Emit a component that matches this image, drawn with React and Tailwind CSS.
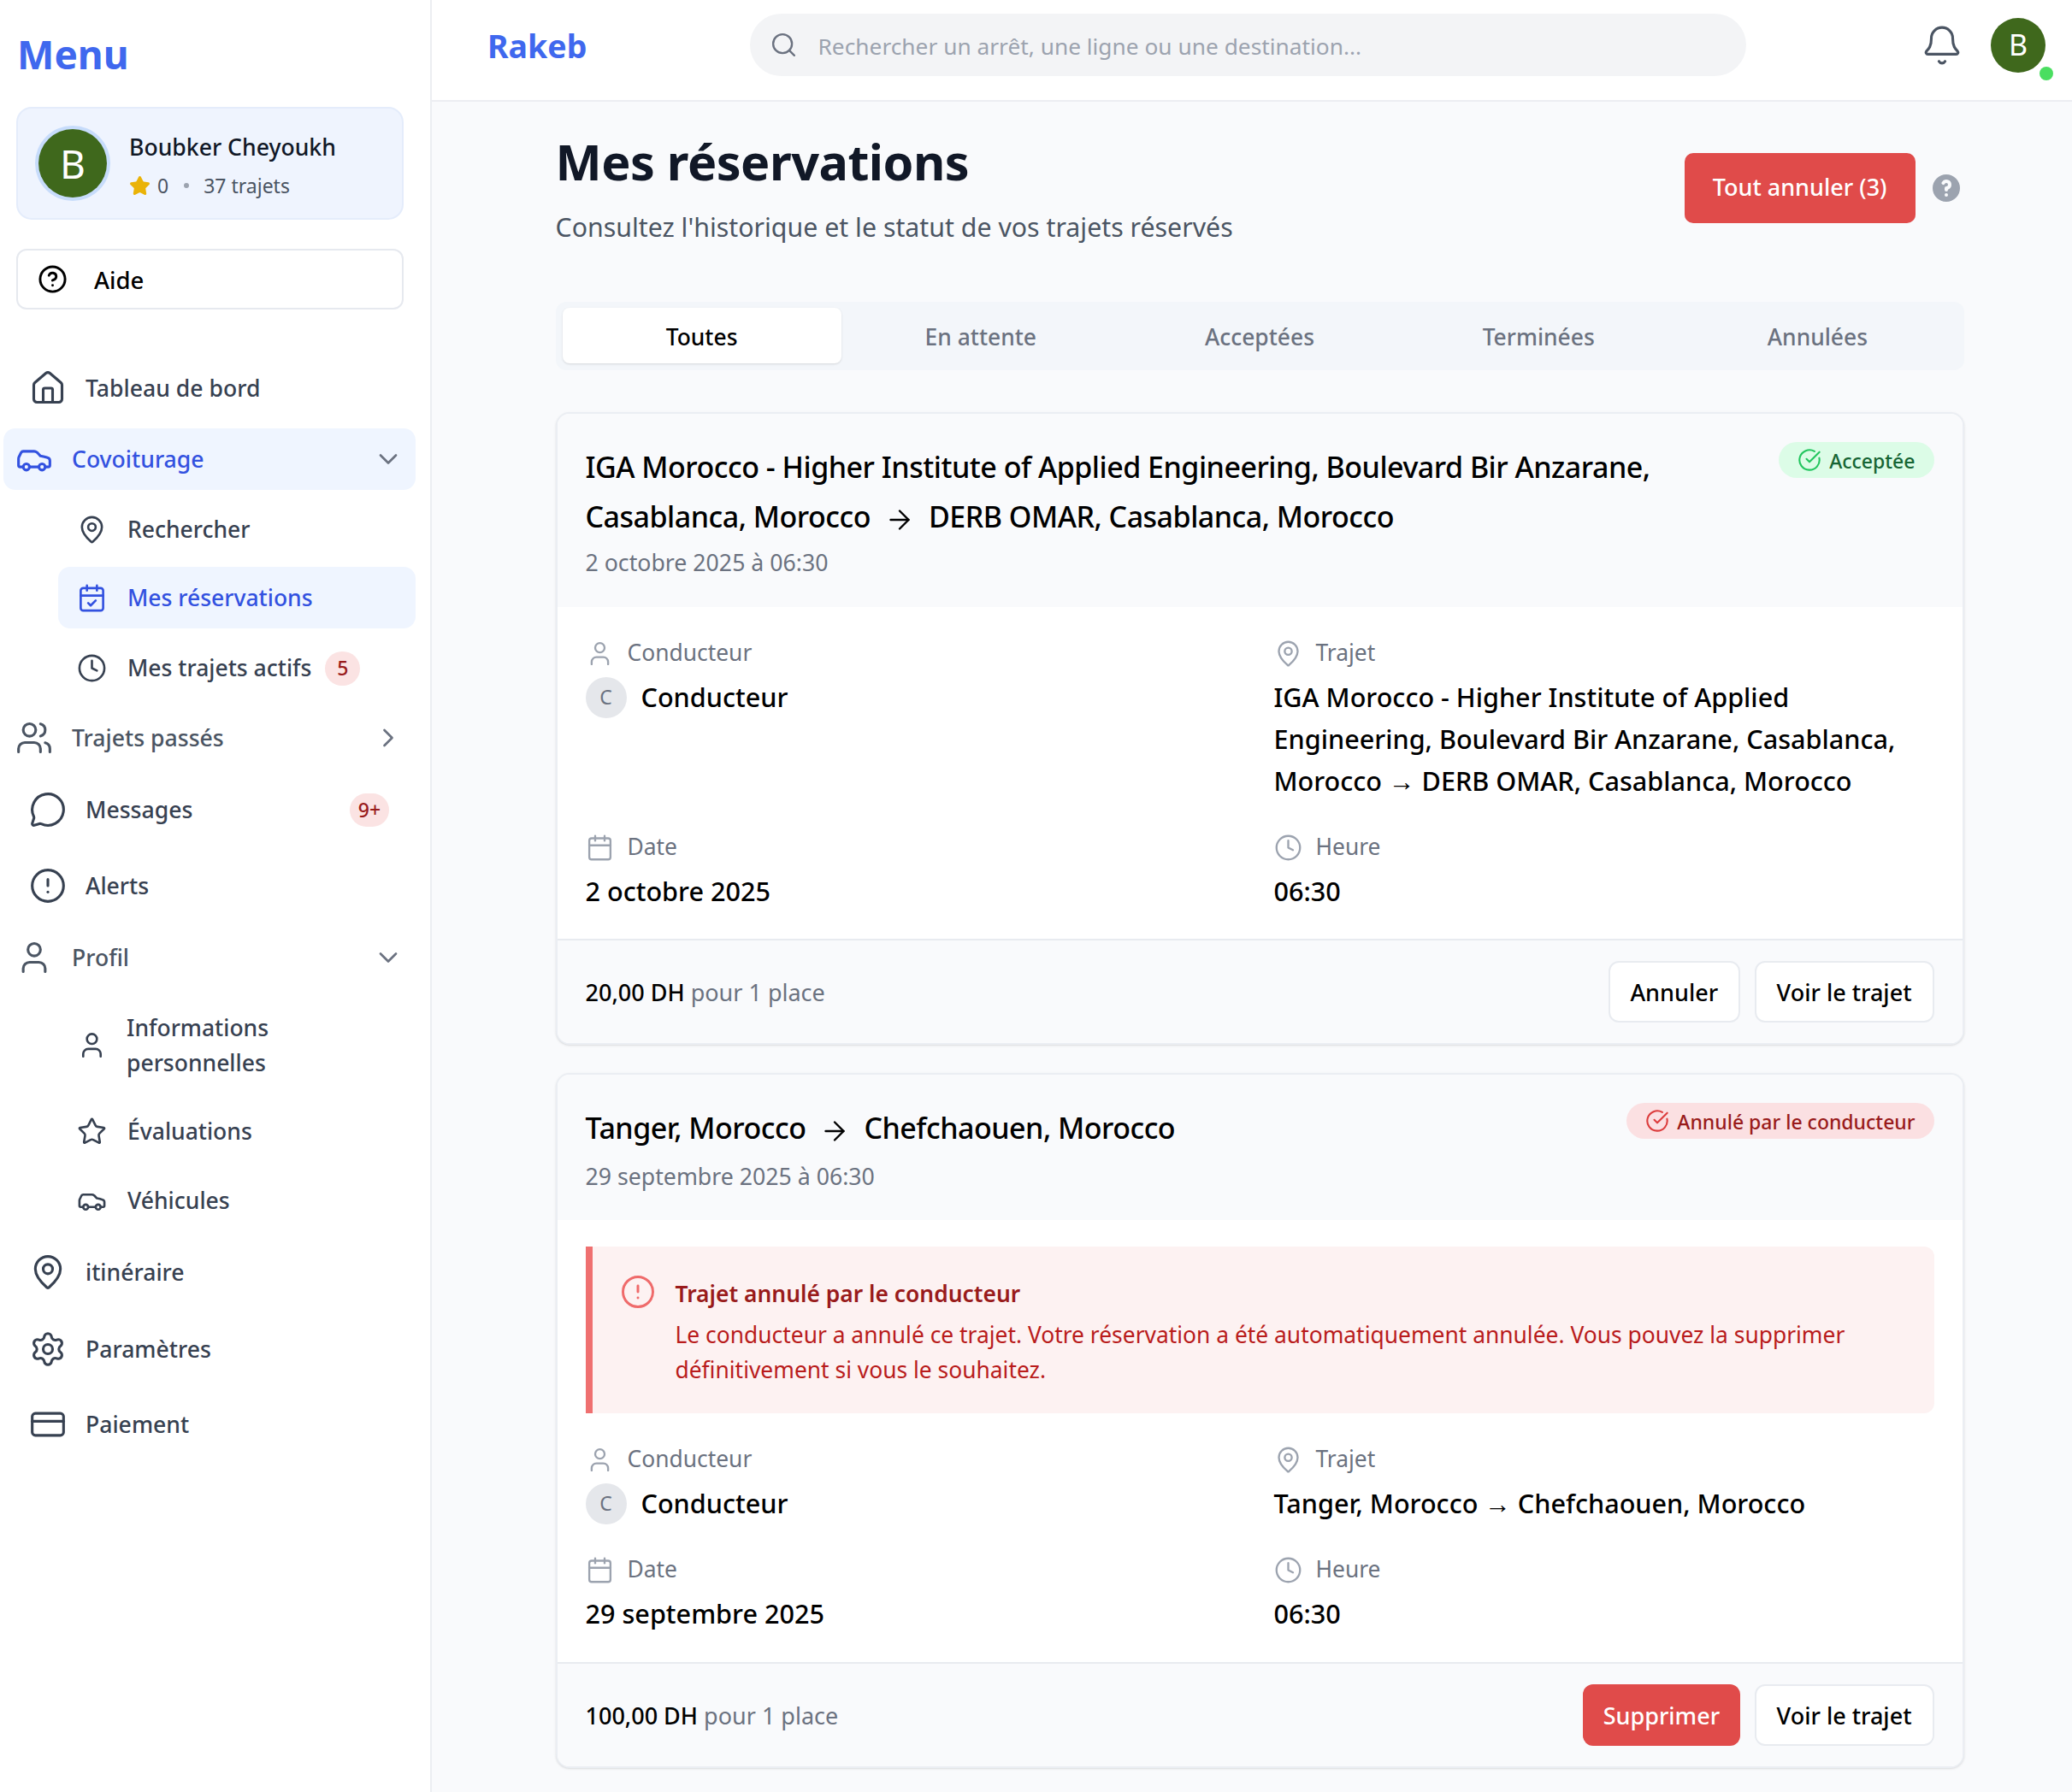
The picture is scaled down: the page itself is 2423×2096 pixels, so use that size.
import React from "react";
import {
  House, Car, MapPin, CalendarCheck, Clock, Users, MessageCircle, CircleAlert, User, Star, Settings,
  CreditCard, Bell, Search, CircleHelp, CircleCheckBig, ArrowRight, Calendar, ChevronDown, ChevronRight,
} from "lucide-react";
import { HiQuestionMarkCircle } from "react-icons/hi";

function Avatar({ className }) {
  return (
    <div className={`flex items-center justify-center rounded-full bg-[#3f681c] text-white ${className}`}>B</div>
  );
}

function Top({ icon: I, label, className = "", color = "text-[#374151]", badge, bg = "" }) {
  return (
    <div className={`flex h-[72px] items-center rounded-[14px] pl-[30px] pr-[31px] text-[26.6px] font-medium ${color} ${bg} ${className}`}>
      <I size={44} strokeWidth={1.7} className="shrink-0" />
      <span className="ml-[22px] pt-[2px]">{label}</span>
      {badge && (
        <span className="ml-auto flex h-[39px] w-[46px] items-center justify-center rounded-full bg-[#fbe3e3] text-[23px] text-[#991b1b]">{badge}</span>
      )}
    </div>
  );
}

function Group({ icon: I, label, className = "", color = "text-[#4b5563]", chevron: C, bg = "" }) {
  return (
    <div className={`flex h-[72px] items-center rounded-[14px] pl-[14px] pr-[14px] text-[26.6px] font-medium ${color} ${bg} ${className}`}>
      <I size={44} strokeWidth={1.7} className="shrink-0" />
      <span className="ml-[22px] pt-[2px]">{label}</span>
      <C size={36} strokeWidth={1.8} className="ml-auto text-[#6b7280]" />
    </div>
  );
}

function Sub({ icon: I, children, className = "", color = "text-[#374151]", bg = "", h = "h-[72px]" }) {
  return (
    <div className={`ml-[64px] flex items-center rounded-[14px] pl-[22px] text-[26.5px] font-medium ${h} ${color} ${bg} ${className}`}>
      <I size={35} strokeWidth={1.8} className="shrink-0" />
      <div className="ml-[24px] flex items-center pt-[1px]">{children}</div>
    </div>
  );
}

function Sidebar() {
  return (
    <aside className="w-[505px] shrink-0 border-r-2 border-[#eceef2] bg-white">
      <div className="pl-[20px] pt-[30px] text-[46px] font-bold leading-[66px] text-[#3f68ee]">Menu</div>
      <div className="ml-[19px] mt-[29px] flex h-[132px] w-[453px] items-center rounded-[18px] border-2 border-[#e4ecfb] bg-[#eff4fe] pl-[20px]">
        <div className="flex h-[88px] w-[88px] items-center justify-center rounded-full bg-[#c7dcfb]">
          <Avatar className="h-[80px] w-[80px] text-[46px]" />
        </div>
        <div className="ml-[22px]">
          <div className="pt-[3px] text-[26.6px] font-medium leading-[40px] text-[#111827]">Boubker Cheyoukh</div>
          <div className="mt-[9px] flex items-center text-[23px] leading-[32px] text-[#4b5563]">
            <Star size={25} className="fill-[#eab308] text-[#eab308]" />
            <span className="ml-[8px]">0</span>
            <span className="ml-[18px] h-[6px] w-[6px] rounded-full bg-[#9ca3af]" />
            <span className="ml-[17px]">37 trajets</span>
          </div>
        </div>
      </div>
      <div className="ml-[19px] mt-[34px] flex h-[71px] w-[453px] items-center rounded-[12px] border-2 border-[#e6e9ef] pl-[23px] text-[27.5px] font-medium text-black">
        <CircleHelp size={35} strokeWidth={2} />
        <span className="ml-[31px] pt-[3px]">Aide</span>
      </div>
      <nav className="mt-[56px] pl-[4px] pr-[17px]">
        <Top icon={House} label="Tableau de bord" />
        <Group icon={Car} label="Covoiturage" color="text-[#3352e0]" bg="bg-[#eff5ff]" chevron={ChevronDown} className="mt-[11px]" />
        <Sub icon={MapPin} className="mt-[10px]">Rechercher</Sub>
        <Sub icon={CalendarCheck} color="text-[#3352e0]" bg="bg-[#eff5ff]" className="mt-[8px]">Mes réservations</Sub>
        <Sub icon={Clock} className="mt-[10px]">
          Mes trajets actifs
          <span className="ml-[16px] flex h-[40px] w-[41px] items-center justify-center rounded-full bg-[#fbe3e3] text-[23px] text-[#991b1b]">5</span>
        </Sub>
        <Group icon={Users} label="Trajets passés" chevron={ChevronRight} className="mt-[10px]" />
        <Top icon={MessageCircle} label="Messages" badge="9+" className="mt-[12px]" />
        <Top icon={CircleAlert} label="Alerts" className="mt-[17px]" />
        <Group icon={User} label="Profil" chevron={ChevronDown} className="mt-[12px]" />
        <Sub icon={User} h="h-[90px]" className="mt-[21px] leading-[41px]">
          <span className="ml-[-1px]">Informations<br />personnelles</span>
        </Sub>
        <Sub icon={Star} className="mt-[20px]">Évaluations</Sub>
        <Sub icon={Car} className="mt-[9px]">Véhicules</Sub>
        <Top icon={MapPin} label="itinéraire" className="mt-[12px]" />
        <Top icon={Settings} label="Paramètres" className="mt-[18px]" />
        <Top icon={CreditCard} label="Paiement" className="mt-[16px]" />
      </nav>
    </aside>
  );
}

function Header() {
  return (
    <header className="h-[119px] border-b-2 border-[#eceef2] bg-white pt-[16px]">
      <div className="flex h-[73px] items-center pl-[65px] pr-[31px]">
        <div className="w-[306.5px] pt-[3px] text-[37.5px] font-bold text-[#3f68ee]">Rakeb</div>
        <div className="flex h-[73px] w-[1165px] items-center rounded-full bg-[#f3f4f6] pl-[23px]">
          <Search size={33} strokeWidth={1.7} className="text-[#6b7280]" />
          <span className="ml-[24px] pt-[4px] text-[26.3px] text-[#9ca3af]">Rechercher un arrêt, une ligne ou une destination...</span>
        </div>
        <Bell size={50} strokeWidth={1.5} className="ml-auto text-[#4b5563]" />
        <div className="relative ml-[32px]">
          <Avatar className="h-[64px] w-[64px] text-[34px]" />
          <span className="absolute bottom-[-9px] right-[-9px] h-[16px] w-[16px] rounded-full bg-[#4ade60]" />
        </div>
      </div>
    </header>
  );
}

function Label({ icon: I, children }) {
  return (
    <div className="flex h-[46px] items-center text-[26.4px] text-[#6b7280]">
      <I size={33} strokeWidth={1.7} className="text-[#9ca3af]" />
      <span className="ml-[16px]">{children}</span>
    </div>
  );
}

function Details({ route, date, pb }) {
  return (
    <div className={`grid grid-cols-2 gap-x-[33px] gap-y-[30px] ${pb}`}>
      <div>
        <Label icon={User}>Conducteur</Label>
        <div className="mt-[4px] flex h-[49px] items-center">
          <span className="flex h-[48px] w-[48px] items-center justify-center rounded-full bg-[#e5e7eb] text-[23px] text-[#6b7280]">C</span>
          <span className="ml-[17px] text-[30.6px] font-medium text-black">Conducteur</span>
        </div>
      </div>
      <div>
        <Label icon={MapPin}>Trajet</Label>
        <div className="mt-[4px] text-[30.6px] font-medium leading-[49px] text-black">{route}</div>
      </div>
      <div>
        <Label icon={Calendar}>Date</Label>
        <div className="mt-[4px] text-[30.6px] font-medium leading-[49px] text-black">{date}</div>
      </div>
      <div>
        <Label icon={Clock}>Heure</Label>
        <div className="mt-[4px] text-[30.6px] font-medium leading-[49px] text-black">06:30</div>
      </div>
    </div>
  );
}

function Badge({ red, children }) {
  return (
    <span className={`flex h-[42px] shrink-0 items-center rounded-full pl-[22px] pr-[22px] text-[23px] font-medium ${red ? "bg-[#fbe0e2] text-[#991b1b]" : "bg-[#dcfce7] text-[#166534]"}`}>
      <CircleCheckBig size={28} strokeWidth={1.8} className={red ? "text-[#dc3c3c]" : "text-[#22c55e]"} />
      <span className="ml-[9px] pt-[2px]">{children}</span>
    </span>
  );
}

function Card({ from, to, date, badge, red, children, price, primary, primaryLabel, className = "", dateGap }) {
  return (
    <section className={`overflow-hidden rounded-[16px] border-2 border-[#ebeef3] bg-white shadow-sm ${className}`}>
      <div className="flex items-start justify-between bg-[#f9fafc] p-[33px]">
        <div className="mr-[70px]">
          <h2 className="text-[34px] font-medium leading-[58px] tracking-[-0.5px] text-black">
            {from.map((part) => (
              <span key={part} className="block">
                {part === from[from.length - 1] ? (
                  <>
                    <span>{part}</span>
                    <ArrowRight size={36} strokeWidth={1.6} className="mx-[16px] inline-block align-middle" />
                    <span>{to}</span>
                  </>
                ) : (
                  part
                )}
              </span>
            ))}
          </h2>
          <div className={`${dateGap} text-[26.7px] leading-[36px] text-[#6b7280]`}>{date}</div>
        </div>
        <Badge red={red}>{badge}</Badge>
      </div>
      <div className="px-[33px] pt-[31px]">{children}</div>
      <div className="flex h-[122px] items-center border-t-2 border-[#e8ebf0] bg-[#f9fafc] px-[33px]">
        <div className="pt-[3px] text-[27px] font-medium text-black">
          {price} <span className="font-normal text-[#6b7280]">pour 1 place</span>
        </div>
        <button className={`ml-auto h-[72px] rounded-[12px] px-[23.5px] pt-[3px] text-[27px] font-medium ${primary ? "bg-[#e04b4a] text-white" : "border-2 border-[#e8ebf0] bg-white text-black"}`}>
          {primaryLabel}
        </button>
        <button className="ml-[17px] h-[72px] rounded-[12px] border-2 border-[#e8ebf0] bg-white px-[24px] pt-[3px] text-[27px] font-medium text-black">
          Voir le trajet
        </button>
      </div>
    </section>
  );
}

export default function App() {
  const tabs = ["Toutes", "En attente", "Acceptées", "Terminées", "Annulées"];
  return (
    <div className="flex h-[2096px] w-[2423px] overflow-hidden bg-[#f9fafc] font-['Noto_Sans',sans-serif]">
      <Sidebar />
      <div className="min-w-0 flex-1">
        <Header />
        <main className="ml-[144.5px] mr-[126.5px] pt-[34px]">
          <div className="flex items-center">
            <div>
              <h1 className="text-[57.5px] font-bold leading-[72px] tracking-[-0.5px] text-[#111827]">Mes réservations</h1>
              <p className="mt-[21px] text-[30.3px] leading-[40px] text-[#4b5563]">Consultez l'historique et le statut de vos trajets réservés</p>
            </div>
            <button className="ml-auto h-[82px] rounded-[10px] bg-[#e04b4a] px-[33px] text-[27px] font-medium text-white">Tout annuler (3)</button>
            <HiQuestionMarkCircle size={40} className="ml-[16px] mr-[1px] text-[#9ca3af]" />
          </div>
          <div className="mt-[67px] grid h-[80px] grid-cols-5 rounded-[12px] bg-[#f3f6fa] px-[8px] pb-[8px] pt-[7px]">
            {tabs.map((t, i) => (
              <div key={t} className={`flex items-center justify-center rounded-[8px] pt-[4px] text-[26.4px] font-medium ${i === 0 ? "bg-white text-black shadow-sm" : "text-[#6b7280]"}`}>{t}</div>
            ))}
          </div>
          <Card
            className="mt-[49px]"
            dateGap="mt-[7px] mb-[1px]"
            from={["IGA Morocco - Higher Institute of Applied Engineering, Boulevard Bir Anzarane,", "Casablanca, Morocco"]}
            to="DERB OMAR, Casablanca, Morocco"
            date="2 octobre 2025 à 06:30"
            badge="Acceptée"
            price="20,00 DH"
            primaryLabel="Annuler"
          >
            <Details
              pb="pb-[31px]"
              route="IGA Morocco - Higher Institute of Applied Engineering, Boulevard Bir Anzarane, Casablanca, Morocco → DERB OMAR, Casablanca, Morocco"
              date="2 octobre 2025"
            />
          </Card>
          <Card
            className="mt-[33px]"
            dateGap="mt-[10px]"
            from={["Tanger, Morocco"]}
            to="Chefchaouen, Morocco"
            date="29 septembre 2025 à 06:30"
            badge="Annulé par le conducteur"
            red
            price="100,00 DH"
            primary
            primaryLabel="Supprimer"
          >
            <div className="mb-[31px] flex h-[195px] rounded-r-[12px] border-l-[8px] border-[#ef7070] bg-[#fdf2f2] pl-[32px] pt-[35px]">
              <CircleAlert size={42} strokeWidth={1.7} className="mt-[-3px] shrink-0 text-[#ef6b6b]" />
              <div className="ml-[23px]">
                <div className="text-[26.4px] font-semibold leading-[40px] text-[#991b1b]">Trajet annulé par le conducteur</div>
                <p className="mt-[8px] max-w-[1420px] text-[26.4px] leading-[41px] text-[#b91c1c]">
                  Le conducteur a annulé ce trajet. Votre réservation a été automatiquement annulée. Vous pouvez la supprimer définitivement si vous le souhaitez.
                </p>
              </div>
            </div>
            <Details pb="pb-[32px]" route="Tanger, Morocco → Chefchaouen, Morocco" date="29 septembre 2025" />
          </Card>
        </main>
      </div>
    </div>
  );
}
